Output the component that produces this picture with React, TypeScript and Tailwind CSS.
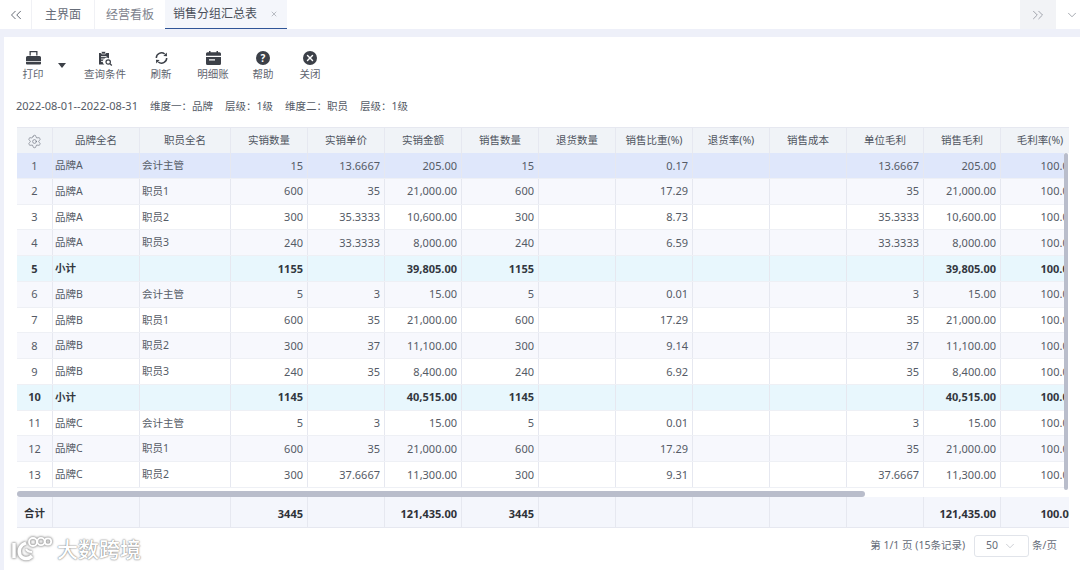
import React from 'react'
import { ChevronDown, ChevronsLeft, ChevronsRight, Settings, X } from 'lucide-react'

const colWidths = [36, 87, 91, 77, 77, 77, 77, 77, 77, 77, 77, 77, 77, 79]
const headers = ['', '品牌全名', '职员全名', '实销数量', '实销单价', '实销金额', '销售数量', '退货数量', '销售比重(%)', '退货率(%)', '销售成本', '单位毛利', '销售毛利', '毛利率(%)']

type Row = { no: number; brand: string; staff: string; qty: string; price: string; amount: string; ratio: string; unit: string; sub?: boolean }

const rows: Row[] = [
    { no: 1, brand: '品牌A', staff: '会计主管', qty: '15', price: '13.6667', amount: '205.00', ratio: '0.17', unit: '13.6667' },
    { no: 2, brand: '品牌A', staff: '职员1', qty: '600', price: '35', amount: '21,000.00', ratio: '17.29', unit: '35' },
    { no: 3, brand: '品牌A', staff: '职员2', qty: '300', price: '35.3333', amount: '10,600.00', ratio: '8.73', unit: '35.3333' },
    { no: 4, brand: '品牌A', staff: '职员3', qty: '240', price: '33.3333', amount: '8,000.00', ratio: '6.59', unit: '33.3333' },
    { no: 5, brand: '小计', staff: '', qty: '1155', price: '', amount: '39,805.00', ratio: '', unit: '', sub: true },
    { no: 6, brand: '品牌B', staff: '会计主管', qty: '5', price: '3', amount: '15.00', ratio: '0.01', unit: '3' },
    { no: 7, brand: '品牌B', staff: '职员1', qty: '600', price: '35', amount: '21,000.00', ratio: '17.29', unit: '35' },
    { no: 8, brand: '品牌B', staff: '职员2', qty: '300', price: '37', amount: '11,100.00', ratio: '9.14', unit: '37' },
    { no: 9, brand: '品牌B', staff: '职员3', qty: '240', price: '35', amount: '8,400.00', ratio: '6.92', unit: '35' },
    { no: 10, brand: '小计', staff: '', qty: '1145', price: '', amount: '40,515.00', ratio: '', unit: '', sub: true },
    { no: 11, brand: '品牌C', staff: '会计主管', qty: '5', price: '3', amount: '15.00', ratio: '0.01', unit: '3' },
    { no: 12, brand: '品牌C', staff: '职员1', qty: '600', price: '35', amount: '21,000.00', ratio: '17.29', unit: '35' },
    { no: 13, brand: '品牌C', staff: '职员2', qty: '300', price: '37.6667', amount: '11,300.00', ratio: '9.31', unit: '37.6667' },
]

const Cell = ({ w, align = 'right', className = '', children }: { w: number; align?: 'left' | 'right' | 'center'; className?: string; children?: React.ReactNode }) => (
    <div
        style={{ width: w }}
        className={`shrink-0 h-full flex items-center overflow-hidden whitespace-nowrap border-r border-[#e6e8f0] ${align === 'right' ? 'justify-end pr-[4px] pt-[1px]' : align === 'center' ? 'justify-center pt-[1px]' : 'justify-start pl-[2px] pt-[1px]'} ${className}`}
    >
        {children}
    </div>
)

const ToolButton = ({ icon, label, className = '' }: { icon: React.ReactNode; label: string; className?: string }) => (
    <div className={`flex flex-col items-center text-[10.5px] leading-[14px] text-[#5f6570] ${className}`}>
        <div className="h-[16px] flex items-center justify-center">{icon}</div>
        <span className="mt-[1px]">{label}</span>
    </div>
)

const PrinterIcon = () => (
    <svg width="15" height="14" viewBox="0 0 15 14" fill="#3c4048">
        <path d="M3.5 0h8v4.5h-1.3V1.3H4.8v3.2H3.5z" />
        <path d="M1.5 5h12A1.5 1.5 0 0 1 15 6.5v3.7H0V6.5A1.5 1.5 0 0 1 1.5 5z" />
        <path d="M0 11h15v1.5a1 1 0 0 1-1 1H1a1 1 0 0 1-1-1z" />
    </svg>
)

const QueryIcon = () => (
    <svg width="15" height="15" viewBox="0 0 15 15" fill="none">
        <path d="M1 2h10v5.4a3.8 3.8 0 0 0-4.6 6.1H1z" fill="#3c4048" />
        <rect x="3.4" y="0.4" width="4.2" height="2.6" rx="0.6" fill="#3c4048" stroke="#fff" strokeWidth="0.7" />
        <path d="M3 5.6h5.5M3 8h3M3 10.4h2" stroke="#fff" strokeWidth="0.9" />
        <circle cx="10.2" cy="11" r="2.2" stroke="#3c4048" strokeWidth="1.2" />
        <path d="M12 12.8l1.8 1.6" stroke="#3c4048" strokeWidth="1.3" />
    </svg>
)

const RefreshIcon = () => (
    <svg width="15" height="14" viewBox="0 0 15 14" fill="none">
        <path d="M2.3 7a5.2 5.2 0 0 1 8.4-4" stroke="#3c4048" strokeWidth="1.5" />
        <path d="M12.7 7a5.2 5.2 0 0 1-8.4 4" stroke="#3c4048" strokeWidth="1.5" />
        <path d="M9.4 4.9l3.6.3-.2-3.7z" fill="#3c4048" />
        <path d="M5.6 9.1 2 8.8l.2 3.7z" fill="#3c4048" />
    </svg>
)

const LedgerIcon = () => (
    <svg width="15" height="14" viewBox="0 0 15 14" fill="#3c4048">
        <path d="M3 0h1.5v1.2h6V0H12v1.2h1.5A1.5 1.5 0 0 1 15 2.7v2H0v-2a1.5 1.5 0 0 1 1.5-1.5H3z" />
        <path d="M0 6h15v6.5a1.5 1.5 0 0 1-1.5 1.5h-12A1.5 1.5 0 0 1 0 12.5zM3 8.2v1.3h6V8.2z" fillRule="evenodd" />
    </svg>
)

const HelpIcon = () => (
    <div className="w-[14px] h-[14px] rounded-full bg-[#3c4048] flex items-center justify-center text-white text-[10px] font-bold leading-none">?</div>
)

const CloseIcon = () => (
    <div className="w-[14px] h-[14px] rounded-full bg-[#3c4048] flex items-center justify-center">
        <X size={10} strokeWidth={3.5} color="#fff" />
    </div>
)

const Watermark = () => (
    <div className="absolute left-[9px] top-[535px] flex items-center">
        <svg width="44" height="28" viewBox="0 0 44 28" fill="none" stroke="#fff" style={{ filter: 'drop-shadow(0 0 1px #999) drop-shadow(0 0 1px #aaa)' }}>
            <path d="M5 8v15" strokeWidth="3.4" />
            <path d="M17 8c-6 2-8 7-6 12 2 4 8 5 12 1" strokeWidth="3.4" />
            <circle cx="24" cy="7" r="4" strokeWidth="1.8" />
            <circle cx="32" cy="6.5" r="3.6" strokeWidth="1.8" />
            <circle cx="39" cy="6.5" r="3.2" strokeWidth="1.8" />
            <path d="M17 14c1 2 3 3 6 3" strokeWidth="2" />
        </svg>
        <span className="ml-[4px] text-[21px] leading-none font-medium text-white [text-shadow:0_0_2px_#777,0_0_1px_#999]">大数跨境</span>
    </div>
)

export default function App() {
    return (
        <div className="relative w-[1080px] h-[570px] overflow-hidden bg-[#eef0f9] text-[11px] text-[#555b66] font-['Noto_Sans','Noto_Sans_CJK_SC',sans-serif]">
            {/* Tabs */}
            <div className="h-[29px] bg-white flex text-[12px] text-[#666c78]">
                <div className="w-[32px] flex items-center justify-center border-r border-[#f0f1f5] text-[#555b66]">
                    <ChevronsLeft size={18} strokeWidth={1.2} />
                </div>
                <div className="w-[63px] flex items-center justify-center border-r border-[#f0f1f5]">主界面</div>
                <div className="w-[70px] flex items-center justify-center text-[#7d828d]">经营看板</div>
                <div className="w-[122px] flex items-center pl-[8px] bg-[#f4f6fb] border-b-[1px] border-[#2f5597] text-[#4a4f5a]">
                    销售分组汇总表
                    <X size={8} className="ml-[13px] text-[#9a9ea8]" />
                </div>
                <div className="flex-1" />
                <div className="w-[36px] bg-[#f2f3f6] flex items-center justify-center text-[#8f939d]">
                    <ChevronsRight size={18} strokeWidth={1.1} />
                </div>
                <div className="w-[24px] flex items-center pl-[9px] text-[#666c78]">
                    <ChevronDown size={14} strokeWidth={1} />
                </div>
            </div>

            <div className="h-[8px]" />

            {/* Panel */}
            <div className="ml-[4px] h-[533px] bg-white">
                {/* Toolbar */}
                <div className="h-[44px] pt-[13px] flex items-start">
                    <ToolButton icon={<PrinterIcon />} label="打印" className="ml-[17px] w-[24px]" />
                    <svg width="8" height="5" viewBox="0 0 8 5" fill="#3c4048" className="ml-[13px] mt-[13px]"><path d="M0 0h8L4 5z" /></svg>
                    <ToolButton icon={<QueryIcon />} label="查询条件" className="ml-[16px] w-[46px]" />
                    <ToolButton icon={<RefreshIcon />} label="刷新" className="ml-[19px] w-[28px]" />
                    <ToolButton icon={<LedgerIcon />} label="明细账" className="ml-[21px] w-[34px]" />
                    <ToolButton icon={<HelpIcon />} label="帮助" className="ml-[21px] w-[24px]" />
                    <ToolButton icon={<CloseIcon />} label="关闭" className="ml-[23px] w-[24px]" />
                </div>

                {/* Filter summary */}
                <div className="mt-[18px] ml-[12px] h-[14px] flex items-center text-[10.5px] leading-[14px] text-[#555b66] whitespace-nowrap">
                    <span className="text-[11px]">2022-08-01--2022-08-31</span>
                    <span className="ml-[12px]">维度一：品牌</span>
                    <span className="ml-[12px]">层级：1级</span>
                    <span className="ml-[12px]">维度二：职员</span>
                    <span className="ml-[12px]">层级：1级</span>
                </div>

                {/* Table */}
                <div className="relative mt-[14px] ml-[13px] w-[1052px] h-[401px] overflow-hidden">
                    <div className="h-[26px] flex bg-[#f0f3f7] text-[10.5px] text-[#4f5560] border-t border-[#e6e8f0]">
                        {headers.map((h, i) => (
                            <Cell key={i} w={colWidths[i]} align="center">
                                {i === 0 ? <Settings size={15} strokeWidth={1} className="text-[#666c78]" /> : h}
                            </Cell>
                        ))}
                    </div>

                    <div className="w-[1047px] overflow-hidden">
                        <div className="w-[1100px]">
                            {rows.map((r, idx) => {
                                const bg = r.no === 1 ? 'bg-[#dfe7fb]' : r.sub ? 'bg-[#e8f7fd]' : idx % 2 === 1 ? 'bg-[#f7f8fd]' : 'bg-white'
                                const vals = [r.qty, r.price, r.amount, r.qty, '', r.ratio, '', '', r.unit, r.amount, '100.00']
                                return (
                                    <div key={r.no} className={`h-[25.75px] flex border-b border-[#eef0f5] ${bg} ${r.sub ? 'font-bold text-[#33373f]' : ''}`}>
                                        <Cell w={colWidths[0]} align="center">{r.no}</Cell>
                                        <Cell w={colWidths[1]} align="left" className="text-[10.5px]">{r.brand}</Cell>
                                        <Cell w={colWidths[2]} align="left" className="text-[10.5px]">{r.staff}</Cell>
                                        {vals.map((v, i) => (
                                            <Cell key={i} w={colWidths[i + 3]}>{v}</Cell>
                                        ))}
                                    </div>
                                )
                            })}
                        </div>
                    </div>

                    {/* Horizontal scroll bar */}
                    <div className="h-[9px] bg-white flex items-end">
                        <div className="h-[6px] w-[848px] rounded-full bg-[#b9bdcb]" />
                    </div>

                    {/* Totals */}
                    <div className="h-[32px] flex bg-[#f4f6fc] border-b-2 border-[#e6e8f0] font-bold text-[#2f3238]">
                        <Cell w={colWidths[0]} align="center" className="text-[10.5px]"><span className="mt-[3px]">合计</span></Cell>
                        {['', '', '3445', '', '121,435.00', '3445', '', '', '', '', '', '121,435.00', '100.00'].map((v, i) => (
                            <Cell key={i} w={colWidths[i + 1]}><span className="mt-[3px]">{v}</span></Cell>
                        ))}
                    </div>

                    {/* Vertical scroll bar */}
                    <div className="absolute left-[1047px] top-[26px] w-[4px] h-[337px] rounded-full bg-[#b9bdcb]" />
                </div>

                {/* Pager */}
                <div className="mt-[7px] h-[22px] flex items-center justify-end pr-[23px] text-[10.5px] text-[#666c78]">
                    <span>第 1/1 页 (15条记录)</span>
                    <div className="ml-[9px] w-[55px] h-[22px] px-[11px] border border-[#e1e4ea] rounded-[3px] flex items-center justify-between">
                        <span>50</span>
                        <ChevronDown size={14} strokeWidth={1} className="text-[#a8acb5]" />
                    </div>
                    <span className="ml-[3px]">条/页</span>
                </div>
            </div>

            <Watermark />
        </div>
    )
}
